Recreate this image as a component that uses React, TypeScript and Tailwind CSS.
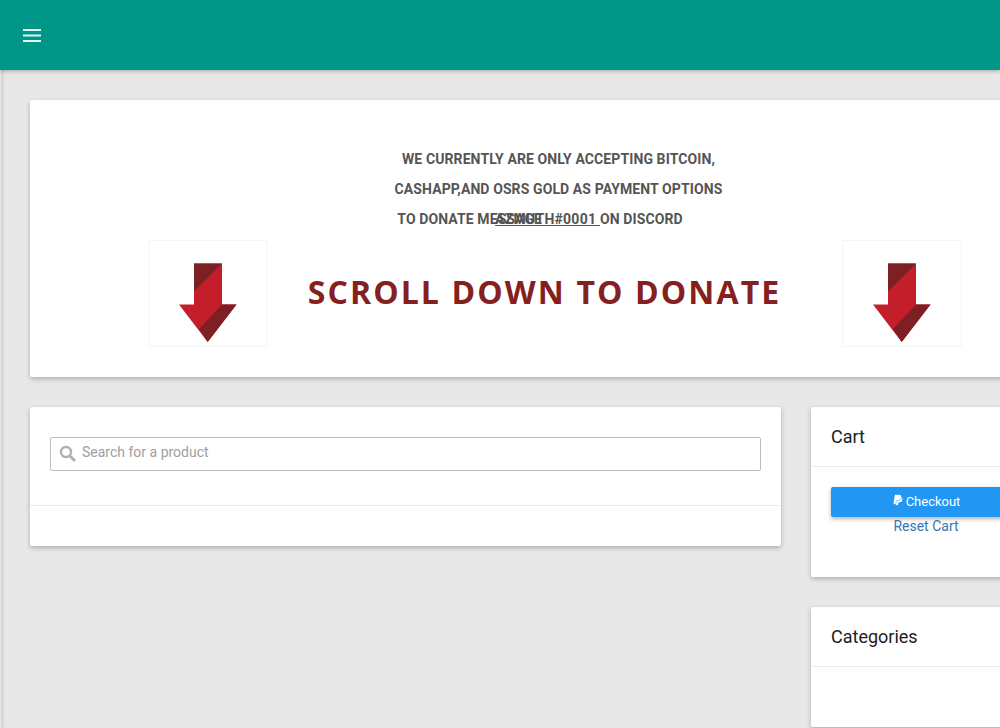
import { FaPaypal } from "react-icons/fa";

function Arrow() {
  return (
    <div className="w-[120px] h-[107px] border border-[#f5f5f5] bg-white shrink-0">
      <svg width="118" height="105" viewBox="149 241 118 105" className="block">
        <polygon points="194,263.5 222,263.5 222,304.5 236.5,304.5 207.7,342 179,304.5 194,304.5" fill="#c41e2a" />
        <polygon points="194,263.5 222,263.5 194,291.5" fill="#7d2023" />
        <polygon points="222,304.5 236.5,304.5 207.7,342 199,329" fill="#7d2023" />
      </svg>
    </div>
  );
}

export default function App() {
  return (
    <div className="relative w-screen h-screen overflow-hidden bg-[#e8e8e8] font-['Roboto',sans-serif]">
      <div className="absolute left-0 top-0 bottom-0 w-[1px] shadow-[0_0_4px_1px_rgba(0,0,0,0.18)]" />
      <header className="relative h-[70px] bg-[#009688] shadow-[0_1px_4px_rgba(0,0,0,0.3)] flex items-center pl-[23px]">
        <svg width="18" height="14" viewBox="0 0 18 14" className="block mt-[1px]">
          <rect x="0" y="0" width="18" height="2" fill="#e0f7f4" />
          <rect x="0" y="5.5" width="18" height="2" fill="#e0f7f4" />
          <rect x="0" y="11" width="18" height="2" fill="#e0f7f4" />
        </svg>
      </header>
      <main className="w-[1071px] pt-[30px] pl-[30px] pr-[30px] flex flex-col gap-[30px]">
        <section className="h-[277px] bg-white rounded-[2px] shadow-[0_2px_5px_rgba(0,0,0,0.25)] pt-[44px]">
          <div className="pl-[46px] text-center text-[14px] leading-[30px] font-bold tracking-[0.1px] text-[#555555]">
            <p>WE CURRENTLY ARE ONLY ACCEPTING BITCOIN,</p>
            <p>CASHAPP,AND OSRS GOLD AS PAYMENT OPTIONS</p>
            <p className="pr-[37px]">
              TO DONATE MESSAGE<span className="ml-[-47px] underline tracking-[0.25px]">AZMUTH#0001 </span> ON DISCORD
            </p>
          </div>
          <div className="mt-[6px] ml-[118px] w-[814px] flex justify-between items-center">
            <Arrow />
            <span className="ml-[1px] mr-[22px] mb-[3px] font-['Open_Sans',sans-serif] font-bold text-[32px] leading-[40px] tracking-[2.1px] text-[#86201f]">
              SCROLL DOWN TO DONATE
            </span>
            <Arrow />
          </div>
        </section>
        <div className="flex gap-[30px] items-start">
          <section className="w-[751px] h-[139px] bg-white rounded-[2px] shadow-[0_2px_5px_rgba(0,0,0,0.25)] pt-[30px] flex flex-col">
            <div className="mx-[20px] h-[34px] border border-[#bdbdbd] rounded-[2px] flex items-center pl-[8px] gap-[5px] pb-[4px]">
              <svg width="18" height="18" viewBox="0 0 18 18" fill="none" stroke="#b0b0b0" className="block mt-[4px]">
                <circle cx="7" cy="7" r="5" strokeWidth="2.4" />
                <path d="M10.8 10.8 L16 16" strokeWidth="3" />
              </svg>
              <span className="text-[14px] text-[#9e9e9e]">Search for a product</span>
            </div>
            <div className="mt-[34px] border-t border-[#ececec]" />
          </section>
          <aside className="w-[230px] flex flex-col gap-[30px]">
            <section className="h-[170px] bg-white rounded-[2px] shadow-[0_2px_5px_rgba(0,0,0,0.25)]">
              <h2 className="h-[60px] flex items-center px-[20px] text-[18px] text-[#212121] border-b border-[#ececec]">Cart</h2>
              <div className="px-[20px] pt-[20px] flex flex-col items-center">
                <button className="w-full h-[30px] bg-[#2196f3] rounded-[2px] text-white text-[13px] shadow-[0_2px_4px_rgba(0,0,0,0.3)] flex items-center justify-center gap-[2px]">
                  <FaPaypal className="text-[12px] mb-[4px]" />
                  Checkout
                </button>
                <a className="text-[14px] leading-[18px] text-[#3a74ad]">Reset Cart</a>
              </div>
            </section>
            <section className="h-[120px] bg-white rounded-[2px] shadow-[0_2px_5px_rgba(0,0,0,0.25)]">
              <h2 className="h-[60px] flex items-center px-[20px] text-[18px] text-[#212121] border-b border-[#ececec]">Categories</h2>
            </section>
          </aside>
        </div>
      </main>
    </div>
  );
}
